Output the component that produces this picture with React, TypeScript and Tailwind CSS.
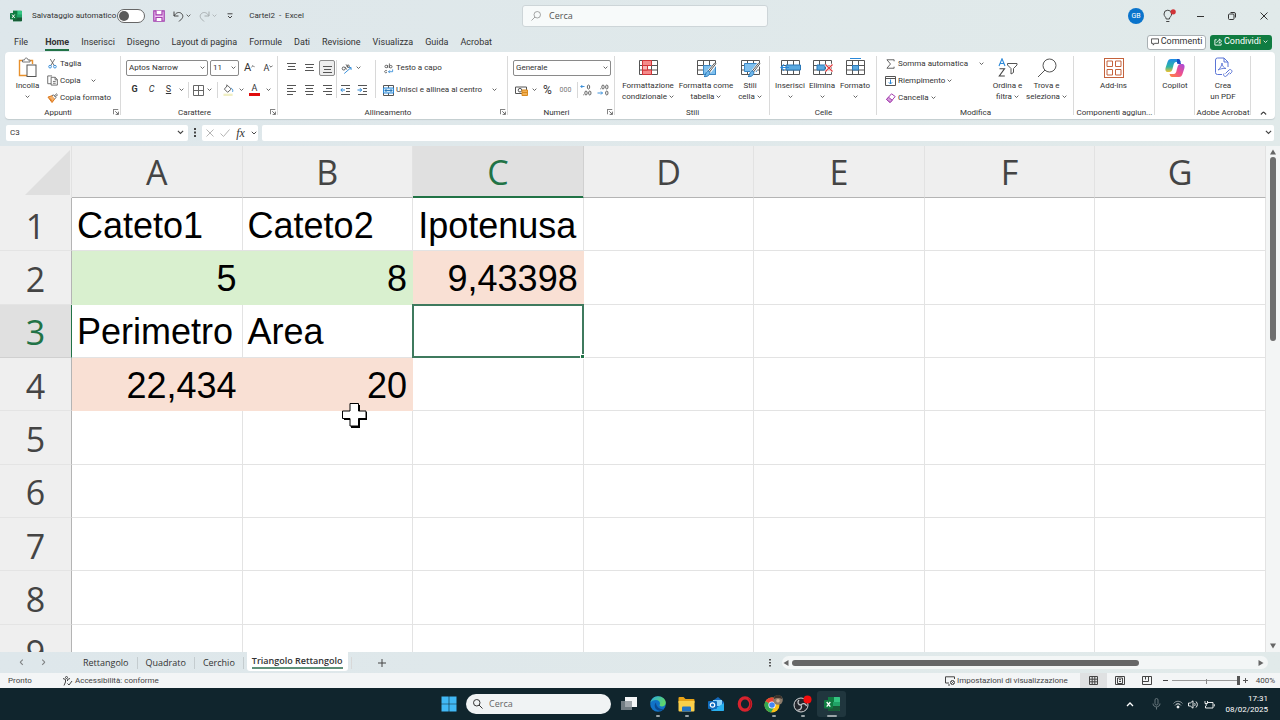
import type { ReactNode } from 'react';
import clsx from 'clsx';

const menu = ['File', 'Home', 'Inserisci', 'Disegno', 'Layout di pagina', 'Formule', 'Dati', 'Revisione', 'Visualizza', 'Guida', 'Acrobat'];
const columns = ['A', 'B', 'C', 'D', 'E', 'F', 'G'];
const sheets = ['Rettangolo', 'Quadrato', 'Cerchio'];

const green = 'bg-[#d9f0cf]';
const peach = 'bg-[#f9e0d4]';

type CellData = { value: string; number?: boolean; fill?: string };

const cells: Record<string, CellData> = {
  A1: { value: 'Cateto1' },
  B1: { value: 'Cateto2' },
  C1: { value: 'Ipotenusa' },
  A2: { value: '5', number: true, fill: green },
  B2: { value: '8', number: true, fill: green },
  C2: { value: '9,43398', number: true, fill: peach },
  A3: { value: 'Perimetro' },
  B3: { value: 'Area' },
  A4: { value: '22,434', number: true, fill: peach },
  B4: { value: '20', number: true, fill: peach },
};

/* ---------- small pieces ---------- */

const Chevron = ({ className = 'w-[5px]' }: { className?: string }) => (
  <svg viewBox="0 0 8 5" className={clsx('shrink-0', className)} fill="none" stroke="#444" strokeWidth="1.3">
    <path d="M1 1l3 3 3-3" />
  </svg>
);

const Launcher = () => (
  <svg viewBox="0 0 8 8" className="w-[6px] h-[6px]" fill="none" stroke="#444" strokeWidth="1">
    <path d="M.5 7V.5H7M3 3l4 4M7.2 3.5v3.7H3.5" />
  </svg>
);

const Divider = ({ className = 'h-4' }: { className?: string }) => <span className={clsx('w-px shrink-0 bg-[#d8d8d8]', className)} />;

interface GroupProps {
  label?: string;
  width: string;
  launcher?: boolean;
  children: ReactNode;
}

const Group = ({ label, width, launcher, children }: GroupProps) => (
  <section className={clsx('relative flex shrink-0 flex-col', width)}>
    <div className="flex h-[55px]">{children}</div>
    <div className={clsx('flex h-3 items-center justify-center whitespace-nowrap', launcher && 'pr-[10px]')}>{label}</div>
    {launcher && (
      <button aria-label={`Opzioni ${label}`} className="absolute right-[2px] bottom-1">
        <Launcher />
      </button>
    )}
    <span className="absolute top-1 right-0 bottom-1 w-px bg-[#dadada]" />
  </section>
);

const IconButton = ({ label, width = 'w-[17px]', className, children }: { label: string; width?: string; className?: string; children: ReactNode }) => (
  <button aria-label={label} className={clsx('flex h-4 shrink-0 items-center justify-center', width, className)}>
    {children}
  </button>
);

interface BigButtonProps {
  icon: ReactNode;
  lines: string[];
  width: string;
  arrow?: 'below' | 'inline';
}

const BigButton = ({ icon, lines, width, arrow }: BigButtonProps) => (
  <button className={clsx('flex shrink-0 flex-col items-center pt-[5px] leading-[11px] whitespace-nowrap', width)}>
    <span className="mb-[2px] flex h-[21px] items-center">{icon}</span>
    {lines.map((line, i) => (
      <span key={line} className="flex items-center gap-[2px]">
        {line}
        {arrow === 'inline' && i === lines.length - 1 && <Chevron />}
      </span>
    ))}
    {arrow === 'below' && (
      <span className="flex h-[11px] items-center">
        <Chevron />
      </span>
    )}
  </button>
);

const RowButton = ({ icon, text, arrow, gap = 'gap-[2px]' }: { icon: ReactNode; text: string; arrow?: boolean; gap?: string }) => (
  <button className={clsx('flex h-[17px] items-center whitespace-nowrap', gap)}>
    <span className="flex items-center gap-[2px]">
      <span className="flex w-3 justify-center">{icon}</span>
      {text}
    </span>
    {arrow && <Chevron />}
  </button>
);

const Picker = ({ label, value, width }: { label: string; value: string; width: string }) => (
  <span className={clsx('relative flex h-4', width)}>
    <select aria-label={label} className="h-full w-full appearance-none rounded-[2px] border border-[#8a8a8a] bg-white px-[2px]">
      <option>{value}</option>
    </select>
    <span className="pointer-events-none absolute inset-y-0 right-[3px] flex items-center">
      <Chevron />
    </span>
  </span>
);

/* ---------- ribbon icons ---------- */

const ExcelIcon = ({ className }: { className: string }) => (
  <svg viewBox="0 0 16 16" className={className}>
    <path d="M4 1h11a1 1 0 011 1v12a1 1 0 01-1 1H4z" fill="#21a366" />
    <path d="M4 1h6v5H4z" fill="#107c41" />
    <path d="M10 1h5a1 1 0 011 1v4h-6z" fill="#33c481" />
    <path d="M4 10h12v4a1 1 0 01-1 1H4z" fill="#185c37" />
    <rect y="4" width="9" height="8.5" rx="1" fill="#107c41" />
    <path d="M2.7 6l3.6 4.6M6.3 6l-3.6 4.6" stroke="#fff" strokeWidth="1.3" />
  </svg>
);

const PasteIcon = () => (
  <svg viewBox="0 0 19 21" className="h-[21px] w-[19px]" fill="none">
    <path d="M4.5 3.5H1.5v15h8M11.5 3.5h3V7" stroke="#e8912d" strokeWidth="1.4" />
    <path d="M4.5 5V3h2c0-2.6 3.5-2.6 3.5 0h2v2z" fill="#fff" stroke="#666" strokeWidth=".9" />
    <rect x="9" y="8" width="9" height="11.5" fill="#fff" stroke="#555" />
  </svg>
);

const CutIcon = () => (
  <svg viewBox="0 0 10 12" className="h-[11px] w-[9px]" fill="none">
    <path d="M2.5 1l4.500 7.500M7.500 1L3 8.500" stroke="#555" strokeWidth=".9" />
    <circle cx="2.300" cy="9.500" r="1.500" stroke="#2b88d8" />
    <circle cx="7.700" cy="9.500" r="1.500" stroke="#2b88d8" />
  </svg>
);

const CopyIcon = () => (
  <svg viewBox="0 0 12 12" className="h-[11px] w-[11px]" fill="#fff" stroke="#555" strokeWidth=".9">
    <path d="M5 9.500H.8V1H5.500" />
    <path d="M4.500 2.500H9L11.300 5v6H4.500z" />
    <path d="M8.800 2.700V5.200h2.400M6.500 7h3M6.500 9h3" fill="none" />
  </svg>
);

const BrushIcon = () => (
  <svg viewBox="0 0 12 11" className="h-[10px] w-[11px]" fill="none">
    <path d="M1 4.500l4.500-1.500 3 3.500-3 4z" fill="#f6b26b" stroke="#d8700f" />
    <path d="M2.500 5.500l3.500 3.500" stroke="#d8700f" />
    <path d="M5.500 3l1.500-1 2.800 3-1.300 1.500M8 3.200L10.500 1l1 1-2.200 2.200" fill="#fff" stroke="#444" strokeWidth=".9" />
  </svg>
);

const AlignIcon = ({ lines }: { lines: [number, number, number][] }) => (
  <svg viewBox="0 0 11 12" className="h-3 w-[11px]" stroke="#555" strokeWidth="1">
    {lines.map(([y, from, to]) => (
      <path key={y} d={`M${from} ${y}h${to - from}`} />
    ))}
  </svg>
);

const IndentIcon = ({ left }: { left?: boolean }) => (
  <svg viewBox="0 0 11 12" className="h-3 w-[11px]" fill="none">
    <path d="M1 1.500h9M6 4.500h4M6 7.500h4M1 10.500h9" stroke="#555" />
    <path d={left ? 'M5 6H1M2.500 4.200L.8 6l1.700 1.800' : 'M.5 6h4M3 4.200L4.700 6 3 7.800'} stroke="#2b88d8" />
  </svg>
);

const BordersIcon = () => (
  <svg viewBox="0 0 11 11" className="h-[11px] w-[11px]" fill="none" stroke="#666">
    <path d="M.5.500h10v10H.5zM5.500.500v10M.5 5.500h10" />
  </svg>
);

const FillIcon = () => (
  <svg viewBox="0 0 12 13" className="h-3 w-[11px]" fill="none">
    <path d="M5 1.500l4 4-4 3.500-3.500-3.500z" stroke="#555" />
    <path d="M4 3V.5" stroke="#555" strokeWidth=".8" />
    <path d="M9 4.500c1.500 1 2 2 1.500 4" stroke="#2b88d8" />
    <path d="M.5 10.500h10V13H.5z" fill="#f0efc4" />
  </svg>
);

const GridIcon = ({ children }: { children?: ReactNode }) => (
  <svg viewBox="0 0 21 20" className="h-5 w-[21px]" fill="none">
    <path d="M1.500 2.500h18v14h-18zM7.500 2.500v14M13.500 2.500v14M1.500 7.500h18M1.500 12h18" stroke="#555" fill="#fff" />
    {children}
  </svg>
);

const brush = (
  <>
    <path d="M19.500 5.500l-7 9-2 .5" stroke="#fff" strokeWidth="4" />
    <path d="M20 5.500l-6.500 8.500M18.800 4.800l-6.500 8.200" stroke="#444" strokeWidth=".9" />
    <path d="M12 12.500l2 1.800c-.5 3.500-3 4.700-6 4.200 2-1 1-3.500 4-6z" fill="#6fb7ea" stroke="#1f6fb2" strokeWidth=".9" />
  </>
);

const SortFilterIcon = () => (
  <svg viewBox="0 0 20 19" className="h-[19px] w-5" fill="none">
    <path d="M1 8l3-7.200L7 8M2.200 5.500h3.700" stroke="#2b88d8" strokeWidth="1.100" />
    <path d="M1.500 10.800h5L1.300 18h5.500" stroke="#444" strokeWidth="1.100" />
    <path d="M9.500 5.500h9.500v1.500l-3.500 3.500v4l-2.500 1.500v-5.500L9.500 7z" stroke="#555" />
  </svg>
);

const SearchGlyph = ({ className }: { className: string }) => (
  <svg viewBox="0 0 20 20" className={className} fill="none" stroke="currentColor">
    <circle cx="12.500" cy="7.500" r="6.500" />
    <path d="M8 12l-7 7" />
  </svg>
);

const CopilotIcon = () => (
  <svg viewBox="0 0 20 20" className="h-5 w-5">
    <defs>
      <linearGradient id="cop1" x1="0" y1="0" x2="0" y2="1">
        <stop offset="0" stopColor="#1f8be8" />
        <stop offset=".6" stopColor="#2fb6a2" />
        <stop offset="1" stopColor="#f2c230" />
      </linearGradient>
      <linearGradient id="cop2" x1="1" y1="0" x2="0" y2="1">
        <stop offset="0" stopColor="#a24be0" />
        <stop offset=".5" stopColor="#f0508c" />
        <stop offset="1" stopColor="#ff8a3c" />
      </linearGradient>
    </defs>
    <path d="M6 1h7c1.500 0 2 1 2.500 3H11C8.500 4 8.500 8 7.500 11c-.5 2-1.500 3-3 3H3c-2.500 0-3-2-2.300-4.500L2.500 4C3.200 2 4 1 6 1z" fill="url(#cop1)" />
    <path d="M14 19H7c-1.500 0-2-1-2.500-3H9c2.500 0 2.500-4 3.500-7 .5-2 1.500-3 3-3H17c2.500 0 3 2 2.300 4.500L17.500 16c-.7 2-1.500 3-3.500 3z" fill="url(#cop2)" />
    <path d="M12 1h1.500c1.200 0 1.700 1 2.500 5-2 0-3 0-4-.5z" fill="#1b4fc4" />
  </svg>
);

const PdfIcon = () => (
  <svg viewBox="0 0 19 21" className="h-[21px] w-[19px]" fill="none" stroke="#5b75d6">
    <path d="M8 17.500H3.500a2 2 0 01-2-2V3a2 2 0 012-2H10l4 4v5M10 1v4h4" />
    <path d="M4 13c2-1.500 4-4.500 4-7 0 3 2 5 4 5.500-3-.3-5.500.2-8 1.500z" strokeWidth=".9" />
    <path d="M11.500 16.500l3.500-3.500c1.500-1.500 4 .8 2.500 2.500l-1.700 1.700M15.500 15.500L12.500 19c-1.500 1.500-4-.8-2.500-2.500" />
  </svg>
);

const Ribbon = () => (
  <div className="mx-[5px] flex h-[67px] shrink-0 rounded-[4px] bg-white shadow-[0_1px_1px_#c3cccf]">
    <Group label="Appunti" width="w-[116px]" launcher>
      <BigButton icon={<PasteIcon />} lines={['Incolla']} width="w-[37px] ml-1" arrow="below" />
      <div className="flex flex-col items-start pt-[3px]">
        <RowButton icon={<CutIcon />} text="Taglia" />
        <RowButton icon={<CopyIcon />} text="Copia" arrow gap="gap-[10px]" />
        <RowButton icon={<BrushIcon />} text="Copia formato" />
      </div>
    </Group>

    <Group label="Carattere" width="w-[157px]" launcher>
      <div className="flex flex-col gap-[6px] pt-2 pl-[5px]">
        <div className="flex items-center gap-[2px]">
          <Picker label="Tipo di carattere" value="Aptos Narrow" width="w-[82px]" />
          <Picker label="Dimensione" value="11" width="w-[29px]" />
          <IconButton label="Aumenta dimensione">
            <span className="text-[11px] leading-4">A</span>
            <svg viewBox="0 0 5 8" className="h-2 w-[4px]" fill="none" stroke="#444">
              <path d="M.5 3l2-2 2 2" />
            </svg>
          </IconButton>
          <IconButton label="Riduci dimensione">
            <span className="text-[9px] leading-4">A</span>
            <svg viewBox="0 0 5 8" className="h-2 w-[4px]" fill="none" stroke="#444">
              <path d="M.5 1l2 2 2-2" />
            </svg>
          </IconButton>
        </div>
        <div className="flex items-center">
          <IconButton label="Grassetto"><b className="text-[9px]">G</b></IconButton>
          <IconButton label="Corsivo"><i className="text-[9px]">C</i></IconButton>
          <IconButton label="Sottolineato"><u className="text-[9px]">S</u></IconButton>
          <IconButton label="Opzioni sottolineatura" width="w-[8px]"><Chevron /></IconButton>
          <Divider className="mx-[3px] h-4" />
          <IconButton label="Bordi" width="w-[12px]"><BordersIcon /></IconButton>
          <IconButton label="Opzioni bordi" width="w-[11px]"><Chevron /></IconButton>
          <Divider className="mx-[2px] h-4" />
          <IconButton label="Riempimento" width="w-[17px]"><FillIcon /></IconButton>
          <IconButton label="Opzioni riempimento" width="w-[8px]"><Chevron /></IconButton>
          <IconButton label="Colore carattere" width="w-[19px]">
            <span className="w-[11px] border-b-[3px] border-[#e00b0b] text-center text-[9px] leading-[9px]">A</span>
          </IconButton>
          <IconButton label="Opzioni colore" width="w-[8px]"><Chevron /></IconButton>
        </div>
      </div>
    </Group>

    <Group label="Allineamento" width="w-[230px]" launcher>
      <div className="flex items-start pt-2 pl-[5px]">
        <div className="flex flex-col gap-[6px]">
          <div className="flex gap-px">
            <IconButton label="Allinea in alto"><AlignIcon lines={[[1.5, 1, 10], [4.5, 2, 9], [7.5, 1, 10]]} /></IconButton>
            <IconButton label="Allinea al centro"><AlignIcon lines={[[2.5, 1, 10], [5.5, 2, 9], [8.5, 1, 10]]} /></IconButton>
            <IconButton label="Allinea in basso" width="w-4" className="rounded-[2px] border border-[#8a8a8a] bg-[#ededed]">
              <AlignIcon lines={[[4.5, 1, 10], [7.5, 2, 9], [10.5, 1, 10]]} />
            </IconButton>
          </div>
          <div className="flex gap-px">
            <IconButton label="Allinea a sinistra"><AlignIcon lines={[[1.5, 1, 10], [4.5, 1, 7], [7.5, 1, 10], [10.5, 1, 7]]} /></IconButton>
            <IconButton label="Centra"><AlignIcon lines={[[1.5, 1, 10], [4.5, 2, 9], [7.5, 1, 10], [10.5, 2, 9]]} /></IconButton>
            <IconButton label="Allinea a destra"><AlignIcon lines={[[1.5, 1, 10], [4.5, 4, 10], [7.5, 1, 10], [10.5, 4, 10]]} /></IconButton>
          </div>
        </div>
        <Divider className="h-[38px]" />
        <div className="flex w-[38px] flex-col gap-[6px]">
          <button aria-label="Orientamento" className="flex h-4 items-center gap-1 pl-1">
            <svg viewBox="0 0 12 12" className="h-[11px] w-[11px]" fill="none">
              <circle cx="3" cy="6" r="1.700" stroke="#555" />
              <path d="M4.500 4.500l1.800 2.700M5.500 1.500l2.500 3.500" stroke="#555" />
              <circle cx="7.800" cy="3.500" r="1.300" stroke="#555" />
              <path d="M3.500 11.500L11 5M8.500 5H11v2.500" stroke="#2b88d8" />
            </svg>
            <Chevron />
          </button>
          <div className="flex">
            <IconButton label="Riduci rientro"><IndentIcon left /></IconButton>
            <IconButton label="Aumenta rientro"><IndentIcon /></IconButton>
          </div>
        </div>
        <Divider className="h-[38px]" />
        <div className="flex flex-col gap-[6px] pl-[7px]">
          <button className="flex h-4 items-center gap-[2px] whitespace-nowrap">
            <svg viewBox="0 0 11 12" className="h-[11px] w-[11px]" fill="none" stroke="#555" strokeWidth=".9">
              <circle cx="3" cy="3.800" r="1.400" />
              <path d="M4.600 2.200v3.200M6.500.5v5M3.800 8.500c-1.800-.8-2.500.2-2.500 1s.8 1.600 2.500.8" />
              <circle cx="8" cy="4" r="1.400" />
              <path d="M10 7v2.500H5.500M7 8L5.500 9.500 7 11" stroke="#2b88d8" />
            </svg>
            Testo a capo
          </button>
          <button className="flex h-4 items-center gap-[2px] whitespace-nowrap">
            <svg viewBox="0 0 11 11" className="h-[11px] w-[11px]" fill="none">
              <path d="M.5.500h10v10H.5zM5.500.500v10" stroke="#555" />
              <path d="M.5 3h10v5H.5z" fill="#cfe8f8" stroke="#2b88d8" />
              <path d="M2 5.500h7M3.500 4L2 5.500 3.500 7M7.500 4L9 5.500 7.500 7" stroke="#1f6fb2" strokeWidth=".9" />
            </svg>
            Unisci e allinea al centro
            <span className="ml-2 flex"><Chevron /></span>
          </button>
        </div>
      </div>
    </Group>

    <Group label="Numeri" width="w-[107px]" launcher>
      <div className="flex flex-col gap-[6px] pt-2 pl-[5px]">
        <Picker label="Formato numero" value="Generale" width="w-[98px]" />
        <div className="flex items-center">
          <IconButton label="Formato contabilità">
            <svg viewBox="0 0 13 11" className="h-[11px] w-[13px]" fill="none">
              <path d="M.5 2h11v6.500H.5z" stroke="#555" />
              <circle cx="5" cy="5.200" r="1.800" stroke="#555" />
              <path d="M7 5h5.500v5.500H7z" fill="#f0b056" stroke="#d98a1e" />
              <path d="M7 7.500h5.500" stroke="#d98a1e" />
            </svg>
          </IconButton>
          <IconButton label="Opzioni valuta" width="w-[8px]"><Chevron /></IconButton>
          <IconButton label="Percentuale" width="w-[19px]"><span className="text-[12px]">%</span></IconButton>
          <IconButton label="Separatore migliaia"><span className="text-[7px] text-[#777]">000</span></IconButton>
          <Divider className="ml-[3px] h-4" />
          <IconButton label="Aumenta decimali" width="w-[15px]">
            <svg viewBox="0 0 12 12" className="h-3 w-3" fill="none" stroke="#555" strokeWidth=".9">
              <path d="M4.500 2.500H.8M2.300 1L.8 2.500 2.300 4" stroke="#2b88d8" />
              <ellipse cx="8.500" cy="3" rx="1.200" ry="2" />
              <ellipse cx="6" cy="9" rx="1.200" ry="2" />
              <ellipse cx="9.800" cy="9" rx="1.200" ry="2" />
              <path d="M3.300 10.800h.8" />
            </svg>
          </IconButton>
          <IconButton label="Diminuisci decimali" width="w-[19px]">
            <svg viewBox="0 0 12 12" className="h-3 w-3" fill="none" stroke="#555" strokeWidth=".9">
              <ellipse cx="6" cy="3" rx="1.200" ry="2" />
              <ellipse cx="9.800" cy="3" rx="1.200" ry="2" />
              <ellipse cx="9.800" cy="9" rx="1.200" ry="2" />
              <path d="M3.300 4.800h.8" />
              <path d="M.5 9h5M4 7.500L5.500 9 4 10.500" stroke="#2b88d8" />
            </svg>
          </IconButton>
        </div>
      </div>
    </Group>

    <Group label="Stili" width="w-[155px]">
      <BigButton
        width="w-[60px] ml-[3px]"
        lines={['Formattazione', 'condizionale']}
        arrow="inline"
        icon={
          <GridIcon>
            <path d="M4.500 2.500h9v5h-9zM4.500 12h9v4.500h-9z" fill="#f48a8a" stroke="#d13438" />
            <path d="M4.500 7.500h5V12h-5z" fill="#f9b8b8" stroke="#d13438" />
          </GridIcon>
        }
      />
      <BigButton
        width="w-[56px]"
        lines={['Formatta come', 'tabella']}
        arrow="inline"
        icon={
          <GridIcon>
            <path d="M7.500 7.500h12v9h-12z" fill="#7fc0ee" stroke="#3b87c4" />
            {brush}
          </GridIcon>
        }
      />
      <BigButton
        width="w-[32px]"
        lines={['Stili', 'cella']}
        arrow="inline"
        icon={
          <GridIcon>
            <path d="M4.500 5.500h12v8h-12z" fill="#7fc0ee" stroke="#3b87c4" />
            {brush}
          </GridIcon>
        }
      />
    </Group>

    <Group label="Celle" width="w-[107px]">
      <BigButton
        width="w-[32px] ml-[4px]"
        lines={['Inserisci']}
        arrow="below"
        icon={
          <GridIcon>
            <path d="M6 7h14.500v5H6z" fill="#5aa9e0" stroke="#2a78b8" />
            <path d="M9 9.500H1M4 6.500L1 9.500l3 3" stroke="#2b88d8" strokeWidth="1.200" />
          </GridIcon>
        }
      />
      <BigButton
        width="w-[32px]"
        lines={['Elimina']}
        arrow="below"
        icon={
          <GridIcon>
            <path d="M5 7h8v5H5z" fill="#5aa9e0" stroke="#2a78b8" />
            <path d="M13.500 6.500l7 7M20.500 6.500l-7 7" stroke="#fff" strokeWidth="3" />
            <path d="M13.500 6.500l7 7M20.500 6.500l-7 7" stroke="#e03a3e" strokeWidth="1.200" />
          </GridIcon>
        }
      />
      <BigButton
        width="w-[34px]"
        lines={['Formato']}
        arrow="below"
        icon={
          <GridIcon>
            <path d="M7.500 7.500h6V12h-6z" fill="#5aa9e0" stroke="#2a78b8" />
            <path d="M5 .5h11" stroke="#2b88d8" />
          </GridIcon>
        }
      />
    </Group>

    <Group label="Modifica" width="w-[197px]">
      <div className="flex w-[112px] flex-col items-start pt-[3px] pl-[7px]">
        <RowButton
          text="Somma automatica"
          arrow
          gap="gap-[11px]"
          icon={
            <svg viewBox="0 0 10 11" className="h-[10px] w-[9px]" fill="none" stroke="#555">
              <path d="M9 2.500V.8H1l4 4.700-4 4.700h8V8.500" />
            </svg>
          }
        />
        <RowButton
          text="Riempimento"
          arrow
          icon={
            <svg viewBox="0 0 11 10" className="h-[10px] w-[11px]" fill="none">
              <path d="M.5.500h10v9H.5zM.5 2.500h10" stroke="#555" />
              <path d="M5.500 3.500v4.500M3.800 6.300L5.500 8l1.700-1.700" stroke="#2b88d8" />
            </svg>
          }
        />
        <RowButton
          text="Cancella"
          arrow
          icon={
            <svg viewBox="0 0 11 10" className="h-[10px] w-[11px]" fill="none" stroke="#a33fae">
              <path d="M6.500.8l3.700 2.700-5 6-3.700-3z" fill="#fff" />
              <path d="M3.500 4.200l3.700 3-2 2.300-3.700-3z" fill="#d59adb" />
            </svg>
          }
        />
      </div>
      <BigButton icon={<SortFilterIcon />} lines={['Ordina e', 'filtra']} width="w-[37px]" arrow="inline" />
      <BigButton icon={<SearchGlyph className="h-5 w-5 text-[#555]" />} lines={['Trova e', 'seleziona']} width="w-[41px]" arrow="inline" />
    </Group>

    <Group label="Componenti aggiun..." width="w-[81px]">
      <BigButton
        width="w-[79px]"
        lines={['Add-ins']}
        icon={
          <svg viewBox="0 0 20 20" className="h-5 w-5" fill="none" stroke="#c4623c">
            <rect x=".5" y=".5" width="19" height="19" />
            <path d="M3 3h5.500v5.500H3zM11.500 3H17v5.500h-5.500zM3 11.500h5.500V17H3zM11.500 11.500H17V17h-5.500z" />
          </svg>
        }
      />
    </Group>
    <Group width="w-[40px]">
      <BigButton icon={<CopilotIcon />} lines={['Copilot']} width="w-full" />
    </Group>
    <Group label="Adobe Acrobat" width="w-[56px]">
      <BigButton icon={<PdfIcon />} lines={['Crea', 'un PDF']} width="w-full" />
    </Group>
    <button aria-label="Comprimi barra multifunzione" className="flex flex-1 items-end justify-center pb-1">
      <Chevron className="w-[7px] rotate-180" />
    </button>
  </div>
);

/* ---------- window chrome ---------- */

const TitleBar = () => (
  <header className="grid h-8 shrink-0 grid-cols-[1fr_auto_1fr] items-center">
    <div className="flex items-center pl-[10px] whitespace-nowrap">
      <ExcelIcon className="h-3 w-3" />
      <label className="ml-[10px] flex items-center gap-px">
        Salvataggio automatico
        <input
          type="checkbox"
          role="switch"
          className="relative h-[14px] w-7 appearance-none rounded-full border border-[#666] bg-white before:absolute before:top-px before:left-px before:h-[10px] before:w-[10px] before:rounded-full before:bg-[#5a5a5a]"
        />
      </label>
      <button aria-label="Salva" className="ml-2">
        <svg viewBox="0 0 12 12" className="h-3 w-3" fill="#efc6f3" stroke="#a33fae" strokeWidth="1.200">
          <path d="M.8.800h10.400v10.400H.8z" />
          <path d="M3 .8v4h6v-4M3 11V7.500h6V11" fill="#fff" />
        </svg>
      </button>
      <button aria-label="Annulla" className="ml-2 flex items-center gap-[2px]">
        <svg viewBox="0 0 11 11" className="h-[11px] w-[11px]" fill="none" stroke="#444">
          <path d="M1 .5v4.500h4.500M1 5c2-3.500 5-4.500 7.500-2.500 2 2 1.500 4 0 5.500L6 10.500" />
        </svg>
        <Chevron />
      </button>
      <button aria-label="Ripeti" className="ml-2 flex items-center gap-[2px] opacity-35">
        <svg viewBox="0 0 11 11" className="h-[11px] w-[11px] -scale-x-100" fill="none" stroke="#444">
          <path d="M1 .5v4.500h4.500M1 5c2-3.500 5-4.500 7.500-2.500 2 2 1.500 4 0 5.500L6 10.500" />
        </svg>
        <Chevron />
      </button>
      <button aria-label="Personalizza" className="ml-[10px]">
        <svg viewBox="0 0 6 6" className="h-[6px] w-[6px]" fill="none" stroke="#444">
          <path d="M.5.800h5M1 3l2 2 2-2" />
        </svg>
      </button>
      <span className="ml-4">Cartel2&nbsp; -&nbsp; Excel</span>
    </div>

    <label className="ml-[10px] flex h-[22px] w-[246px] items-center gap-2 rounded-[3px] border border-[#cdd5d8] bg-[#f7fafa] px-2 font-['Open_Sans','Noto_Sans',sans-serif] text-[9px] text-[#555]">
      <SearchGlyph className="h-[10px] w-[10px]" />
      <input aria-label="Cerca" placeholder="Cerca" className="min-w-0 flex-1 bg-transparent outline-none placeholder:text-[#555]" />
    </label>

    <div className="flex justify-end">
      <button className="flex w-8 items-center justify-center" aria-label="Account">
        <span className="flex h-4 w-4 items-center justify-center rounded-full bg-[#0a74cc] text-[7px] text-white">GB</span>
      </button>
      <button className="flex w-8 items-center justify-center" aria-label="Suggerimenti">
        <svg viewBox="0 0 13 14" className="ml-[3px] h-[14px] w-[13px]" fill="none" stroke="#444">
          <path d="M3.200 10c0-2-2.200-2.500-2.200-5a3.800 3.800 0 017.600 0c0 2.500-2.200 3-2.200 5zM3.200 12.500h3.200" />
          <circle cx="10.200" cy="2.800" r="2.600" fill="#d13438" stroke="none" />
        </svg>
      </button>
      <button className="flex h-8 w-8 items-center justify-center" aria-label="Riduci a icona">
        <span className="h-px w-[7px] bg-[#333]" />
      </button>
      <button className="flex w-8 items-center justify-center" aria-label="Ripristina">
        <svg viewBox="0 0 8 8" className="h-2 w-2" fill="none" stroke="#333">
          <rect x=".5" y="2" width="5.500" height="5.500" rx="1" />
          <path d="M2.500.500H6a1.500 1.500 0 011.500 1.500v3.500" />
        </svg>
      </button>
      <button className="flex w-8 items-center justify-center" aria-label="Chiudi">
        <svg viewBox="0 0 8 8" className="h-2 w-2" stroke="#333">
          <path d="M.5.500l7 7M7.500.500l-7 7" />
        </svg>
      </button>
    </div>
  </header>
);

const MenuBar = () => (
  <nav className="flex h-5 shrink-0 items-center gap-3 pr-2 pl-[14px] text-[9px]">
    {menu.map((item) => (
      <button key={item} className={clsx('h-[17px] border-b-2 pt-px leading-[14px] whitespace-nowrap', item === 'Home' ? 'ml-[5px] border-[#217346] font-bold' : 'border-transparent')}>
        {item}
      </button>
    ))}
    <div className="ml-auto flex gap-1">
      <button className="flex h-[15px] w-[59px] items-center justify-center gap-[2px] rounded-[3px] border border-[#a9b0b3] bg-white">
        <svg viewBox="0 0 9 9" className="h-2 w-2" fill="none" stroke="#444">
          <path d="M.5 1h8v5H4L2.500 8V6h-2z" />
        </svg>
        Commenti
      </button>
      <button className="flex h-[15px] w-[62px] items-center justify-center gap-[2px] rounded-[3px] bg-[#107c41] text-white">
        <svg viewBox="0 0 9 9" className="h-2 w-2" fill="none" stroke="#fff">
          <path d="M3 2H1v6h7V6M3 5.500C3.500 3.500 5 3 6 3V1l2.500 2.500L6 6V4" />
        </svg>
        Condividi
        <svg viewBox="0 0 8 5" className="w-[5px]" fill="none" stroke="#fff" strokeWidth="1.300">
          <path d="M1 1l3 3 3-3" />
        </svg>
      </button>
    </div>
  </nav>
);

const FormulaBar = () => (
  <div className="flex h-[27px] shrink-0 items-center px-[6px]">
    <label className="flex h-4 w-[182px] items-center rounded-[2px] bg-white pr-1 pl-1">
      <input aria-label="Casella nome" defaultValue="C3" className="min-w-0 flex-1 outline-none" />
      <Chevron className="w-[7px]" />
    </label>
    <svg viewBox="0 0 2 9" className="mx-[6px] h-[9px] w-[2px]" fill="#444">
      <path d="M0 0h2v2H0zM0 3.500h2v2H0zM0 7h2v2H0z" />
    </svg>
    <div className="flex h-4 w-[56px] items-center justify-between rounded-[2px] bg-white pr-px pl-1">
      <button aria-label="Annulla modifica">
        <svg viewBox="0 0 8 8" className="h-2 w-2" stroke="#b5b5b5"><path d="M.5.500l7 7M7.500.500l-7 7" /></svg>
      </button>
      <button aria-label="Conferma">
        <svg viewBox="0 0 10 8" className="h-2 w-[10px]" fill="none" stroke="#b5b5b5"><path d="M.5 4.500l3 3 6-7" /></svg>
      </button>
      <button aria-label="Inserisci funzione" className="font-['Liberation_Serif',serif] text-[12px] leading-4 italic">fx</button>
      <Chevron className="w-[6px]" />
    </div>
    <label className="ml-1 flex h-4 flex-1 items-center rounded-[2px] bg-white pr-[2px]">
      <input aria-label="Barra della formula" className="min-w-0 flex-1 outline-none" />
      <Chevron className="w-[7px]" />
    </label>
  </div>
);

/* ---------- sheet ---------- */

const headText = "text-[34px] leading-none font-normal text-[#444] font-['Open_Sans','Noto_Sans',sans-serif]";

const Sheet = () => (
  <main className="relative flex min-h-0 flex-1 overflow-hidden bg-[#efefef]">
    <div className="min-w-0 flex-1">
      <table className="h-[532px] w-full table-fixed border-separate border-spacing-0">
        <thead>
          <tr className="h-[52px]">
            <th className="w-[72px] border-r border-r-[#e2e2e2] bg-[#efefef] p-0">
              <svg viewBox="0 0 45 45" className="mr-px ml-auto h-[45px] w-[45px]">
                <path d="M45 0v45H0z" fill="#dfdfdf" />
              </svg>
            </th>
            {columns.map((col) => (
              <th
                key={col}
                scope="col"
                className={clsx(
                  'border-r border-b p-0',
                  headText,
                  col === 'C' ? 'border-r-[#d0d0d0] border-b-[#217346] bg-[#e0e0e0] text-[#217346] shadow-[inset_0_-1px_0_#217346]' : 'border-r-[#e2e2e2] border-b-[#b4b4b4] bg-[#efefef]'
                )}
              >
                {col}
              </th>
            ))}
          </tr>
        </thead>
        <tbody>
          {[1, 2, 3, 4, 5, 6, 7, 8, 9].map((row) => (
            <tr key={row} className="h-[53px]">
              <th
                scope="row"
                className={clsx(
                  'border-r border-b px-0 pt-[3px] pb-0 align-middle',
                  headText,
                  row === 3 ? 'border-r-[#217346] border-b-[#d0d0d0] bg-[#e0e0e0] text-[#217346]' : 'border-r-[#b4b4b4] border-b-[#e4e4e4] bg-[#efefef]'
                )}
              >
                {row}
              </th>
              {columns.map((col) => {
                const cell = cells[`${col}${row}`];
                const active = col === 'C' && row === 3;
                return (
                  <td
                    key={col}
                    className={clsx(
                      "relative border-r border-b px-[5px] pt-[3px] pb-0 font-['Liberation_Sans',sans-serif] text-[36px] leading-none whitespace-nowrap text-black",
                      cell?.number && 'text-right',
                      cell?.fill ? clsx(cell.fill, 'border-transparent') : 'border-[#e3e3e3] bg-white'
                    )}
                  >
                    {cell?.value}
                    {active && (
                      <span className="absolute -inset-px z-10 border-2 border-[#3f7a5e]">
                        <span className="absolute -right-[3px] -bottom-[3px] h-[5px] w-[5px] border border-white bg-[#217346]" />
                      </span>
                    )}
                  </td>
                );
              })}
            </tr>
          ))}
        </tbody>
      </table>
    </div>

    <div className="flex w-[14px] shrink-0 flex-col items-center justify-between bg-[#f3f5f5] py-[3px]">
      <svg viewBox="0 0 6 6" className="h-[6px] w-[6px] shrink-0" fill="#666"><path d="M3 .5l3 5H0z" /></svg>
      <div className="my-[2px] w-full flex-1">
        <div className="mx-auto h-[38%] w-[6px] rounded-full bg-[#6e6e6e]" />
      </div>
      <svg viewBox="0 0 6 6" className="h-[6px] w-[6px] shrink-0" fill="#666"><path d="M3 5.500l3-5H0z" /></svg>
    </div>

    {/* cross pointer */}
    <svg viewBox="0 0 26 26" className="pointer-events-none absolute top-[256px] left-[341px] z-20 h-[26px] w-[26px]">
      <path d="M10 3h9v7h7v8h-7v8h-9v-8H3v-8h7z" fill="#000" />
      <path d="M9 1.500h8.500v7.500H25v7.500h-7.500V24H9v-7.500H1.500V9H9z" fill="#fff" stroke="#000" />
    </svg>
  </main>
);

const SheetTabs = () => (
  <div className="flex h-[21px] shrink-0 items-center font-['Open_Sans','Noto_Sans',sans-serif] text-[9px]">
    <div className="flex w-[75px] gap-[15px] pl-[18px]">
      <button aria-label="Foglio precedente"><Chevron className="w-[7px] rotate-90 opacity-60" /></button>
      <button aria-label="Foglio successivo"><Chevron className="w-[7px] -rotate-90 opacity-60" /></button>
    </div>
    {sheets.map((name) => (
      <button key={name} className="flex h-3 items-center border-r border-[#c4cccf] px-[8px]">{name}</button>
    ))}
    <button className="ml-[3px] flex h-[19px] items-center self-start rounded-b-[3px] bg-white px-[5px] font-semibold">
      <span className="border-b-2 border-[#5f9079] leading-[13px]">Triangolo Rettangolo</span>
    </button>
    <Divider className="ml-[3px] h-3 bg-[#c4cccf]" />
    <button aria-label="Nuovo foglio" className="ml-[26px]">
      <svg viewBox="0 0 8 8" className="h-2 w-2" stroke="#444"><path d="M4 0v8M0 4h8" /></svg>
    </button>
    <svg viewBox="0 0 2 8" className="mr-[11px] ml-auto h-2 w-[2px]" fill="#555">
      <path d="M0 0h2v1.500H0zM0 3h2v1.500H0zM0 6h2v1.500H0z" />
    </svg>
    <div className="mr-3 flex h-[13px] w-[38%] items-center gap-[3px] rounded-full bg-[#f3f6f6] pr-1 pl-px">
      <svg viewBox="0 0 6 6" className="h-[6px] w-[6px]" fill="#666"><path d="M.5 3l5-3v6z" /></svg>
      <div className="flex-1">
        <div className="h-[6px] w-[75%] rounded-full bg-[#666]" />
      </div>
      <svg viewBox="0 0 6 6" className="h-[6px] w-[6px]" fill="#666"><path d="M5.500 3l-5-3v6z" /></svg>
    </div>
  </div>
);

const StatusBar = () => (
  <div className="flex h-[15px] shrink-0 items-center bg-[#f3f5f6] pr-[5px] pl-2 text-[#444]">
    <span className="w-[54px]">Pronto</span>
    <button className="flex items-center gap-[2px]">
      <svg viewBox="0 0 11 10" className="h-[10px] w-[11px]" fill="none" stroke="#444">
        <circle cx="4.500" cy="1.500" r="1" />
        <path d="M1 2.500l2.500 1V6L2 9.500M8 2.500l-2.500 1V5M5.500 7.500l1.500 1.500 3-4" />
      </svg>
      Accessibilità: conforme
    </button>
    <button className="ml-auto flex items-center gap-px">
      <svg viewBox="0 0 11 10" className="h-[10px] w-[11px]" fill="none" stroke="#444">
        <path d="M9.500 3V.8h-9V7H4M3 9h2" />
        <circle cx="7.500" cy="6.500" r="2" />
        <path d="M6 5l3 3M9 5L6 8" strokeWidth=".7" />
      </svg>
      Impostazioni di visualizzazione
    </button>
    <div className="ml-3 flex">
      <button aria-label="Normale" className="flex h-[15px] w-[27px] items-center justify-center bg-[#dfe1e2]">
        <svg viewBox="0 0 9 9" className="h-[9px] w-[9px]" fill="none" stroke="#444"><path d="M.5.500h8v8h-8zM3.200.500v8M5.800.500v8M.5 3.200h8M.5 5.800h8" /></svg>
      </button>
      <button aria-label="Layout di pagina" className="flex h-[15px] w-[27px] items-center justify-center">
        <svg viewBox="0 0 10 9" className="h-[9px] w-[10px]" fill="none" stroke="#444"><path d="M.5.500h9v8h-9zM2.500 2h5v5.500h-5zM4 3.700h2M4 5.500h2" /></svg>
      </button>
      <button aria-label="Interruzioni di pagina" className="flex h-[15px] w-[27px] items-center justify-center">
        <svg viewBox="0 0 10 9" className="h-[9px] w-[10px]" fill="none" stroke="#444"><path d="M.5.500h9v8h-9zM.5 5.500h6v-5M3.500.500v3" /></svg>
      </button>
    </div>
    <button aria-label="Zoom indietro" className="ml-[2px] h-px w-[5px] bg-[#444]" />
    <label className="relative ml-1 flex w-[68px] items-center">
      <span className="absolute top-1/2 left-1/2 -mt-[2px] h-[5px] w-px bg-[#888]" />
      <input
        type="range"
        aria-label="Zoom"
        min={10}
        max={400}
        defaultValue={400}
        className="h-2 w-full appearance-none bg-transparent [&::-webkit-slider-runnable-track]:h-px [&::-webkit-slider-runnable-track]:bg-[#999] [&::-webkit-slider-thumb]:-mt-[4px] [&::-webkit-slider-thumb]:h-[9px] [&::-webkit-slider-thumb]:w-[3px] [&::-webkit-slider-thumb]:appearance-none [&::-webkit-slider-thumb]:bg-[#555]"
      />
    </label>
    <button aria-label="Zoom avanti" className="ml-[3px]">
      <svg viewBox="0 0 5 5" className="h-[5px] w-[5px]" stroke="#555"><path d="M2.500 0v5M0 2.500h5" /></svg>
    </button>
    <span className="ml-2">400%</span>
  </div>
);

/* ---------- taskbar ---------- */

const EdgeIcon = () => (
  <svg viewBox="0 0 16 16" className="h-4 w-4">
    <defs>
      <linearGradient id="edge1" x1="0" y1="0" x2="1" y2=".4">
        <stop offset="0" stopColor="#2aa9e0" />
        <stop offset="1" stopColor="#5fd66b" />
      </linearGradient>
    </defs>
    <circle cx="8" cy="8" r="7.800" fill="#1173c7" />
    <path d="M.3 7C1 3 4 .2 8 .2c4.500 0 7.800 3 7.800 6.500 0 2.300-1.800 3.800-4 3.800-1.500 0-2.300-.6-2.300-1.200 0-.5.500-.8.500-1.800C10 5.500 8.300 4 6 4 3.500 4 1 5 .3 7z" fill="url(#edge1)" />
    <path d="M6 6.500c-1.800 1.500-1.800 5 .5 7 2 1.700 5 1.500 7.500-.7-1.500.5-4 .3-5.500-1C7 10.500 6 9 6 6.500z" fill="#0b4a92" />
  </svg>
);

const ChromeIcon = () => (
  <svg viewBox="0 0 19 18" className="h-[18px] w-[19px]">
    <circle cx="8" cy="10" r="7.500" fill="#fbc116" />
    <path d="M8 10L1.500 6.200A7.500 7.500 0 0114.500 6.200z" fill="#ea4335" />
    <path d="M8 10l-6.500-3.800A7.500 7.500 0 007 17.400l3.500-6z" fill="#34a853" />
    <circle cx="8" cy="10" r="3.600" fill="#fff" />
    <circle cx="8" cy="10" r="2.800" fill="#4285f4" />
    <circle cx="14" cy="5" r="4.800" fill="#8d7c6b" />
    <path d="M10 4a4 4 0 018 0c-2-1.500-6-1.500-8 0z" fill="#3c332c" />
    <circle cx="14" cy="5.800" r="1.800" fill="#d6b596" />
  </svg>
);

const taskbarApps: { name: string; running?: boolean; active?: boolean; icon: ReactNode }[] = [
  {
    name: 'Visualizzazione attività',
    icon: (
      <svg viewBox="0 0 17 16" className="h-4 w-[17px]">
        <rect x="5" y="1" width="12" height="10" fill="#f4f6f7" />
        <rect x="1" y="5" width="11" height="9" fill="#8b9498" opacity=".8" />
      </svg>
    ),
  },
  { name: 'Edge', running: true, icon: <EdgeIcon /> },
  {
    name: 'Esplora file',
    running: true,
    icon: (
      <svg viewBox="0 0 17 15" className="h-[15px] w-[17px]">
        <path d="M.5 1a1 1 0 011-1h4L7.500 2h8a1 1 0 011 1v3H.5z" fill="#e8a317" />
        <path d="M.5 4h16v9.500a1 1 0 01-1 1h-14a1 1 0 01-1-1z" fill="#fbcf4a" />
        <path d="M4 14.500V10.500a1 1 0 011-1h7a1 1 0 011 1v4z" fill="#2473c4" />
      </svg>
    ),
  },
  {
    name: 'Outlook',
    icon: (
      <svg viewBox="0 0 16 16" className="h-4 w-4">
        <path d="M3 6l7-5 6 5v8a1 1 0 01-1 1H4a1 1 0 01-1-1z" fill="#1468b8" />
        <path d="M5 4h9v6H5z" fill="#8bd3fa" />
        <path d="M3 15l13-8v7a1 1 0 01-1 1z" fill="#29b0ee" />
        <rect y="5" width="9" height="8" rx="1" fill="#0f6cbd" />
        <circle cx="4.500" cy="9" r="2.200" fill="none" stroke="#fff" strokeWidth="1.200" />
      </svg>
    ),
  },
  {
    name: 'Opera',
    icon: (
      <svg viewBox="0 0 16 16" className="h-4 w-4">
        <ellipse cx="8" cy="8" rx="5.700" ry="6.200" fill="none" stroke="#d8232e" strokeWidth="3.200" />
        <path d="M11 2a7 7 0 010 12 9 9 0 000-12z" fill="#a3121b" />
      </svg>
    ),
  },
  { name: 'Chrome', running: true, icon: <ChromeIcon /> },
  {
    name: 'OBS',
    running: true,
    icon: (
      <svg viewBox="0 0 19 18" className="h-[18px] w-[19px]" fill="none">
        <circle cx="8" cy="10" r="7" fill="#23262c" stroke="#d5d8da" />
        <path d="M8 10c-3 0-4-3-2-5M8 10c1.500-2.500 5-1.500 5.500 1M8 10c1.500 2.500-.5 5.500-3.500 5" stroke="#c3c7ca" strokeWidth="1.300" />
        <circle cx="14.500" cy="4.500" r="4" fill="#f40d0d" />
      </svg>
    ),
  },
  { name: 'Excel', running: true, active: true, icon: <ExcelIcon className="h-4 w-4" /> },
];

const Taskbar = () => (
  <footer className="grid h-8 shrink-0 grid-cols-[1fr_auto_1fr] items-center bg-[#10252d] text-white">
    <span />
    <div className="flex items-center gap-[3px]">
      <button aria-label="Start" className="flex w-[29px] justify-center">
        <svg viewBox="0 0 16 16" className="h-4 w-4" fill="#41b8f5">
          <path d="M.5.500h7.200v7.200H.5zM8.300.500h7.200v7.200H8.300zM.5 8.300h7.200v7.200H.5zM8.300 8.300h7.200v7.200H8.300z" />
        </svg>
      </button>
      <label className="flex h-5 w-[145px] items-center gap-[6px] rounded-full bg-[#f0f3f4] px-[7px] font-['Open_Sans','Noto_Sans',sans-serif] text-[9px] text-[#333]">
        <SearchGlyph className="h-[10px] w-[10px] -scale-x-100 stroke-2" />
        <input aria-label="Cerca nella barra" placeholder="Cerca" className="min-w-0 flex-1 bg-transparent outline-none placeholder:text-[#666]" />
      </label>
      <div className="flex">
        {taskbarApps.map((app) => (
          <button
            key={app.name}
            aria-label={app.name}
            className={clsx('relative flex h-[26px] w-[29px] items-center justify-center rounded-[3px]', app.active && 'bg-[#20363e]')}
          >
            {app.icon}
            {app.running && <span className={clsx('absolute bottom-0 h-[2px] rounded-full bg-[#9aa4a8]', app.active ? 'w-[10px]' : 'w-1')} />}
          </button>
        ))}
      </div>
    </div>
    <div className="flex items-center justify-end pr-3">
      <svg viewBox="0 0 8 5" className="mr-[18px] w-2" fill="none" stroke="#fff" strokeWidth="1.300"><path d="M1 4l3-3 3 3" /></svg>
      <svg viewBox="0 0 9 12" className="mr-3 h-3 w-[9px]" fill="none" stroke="#67767c">
        <rect x="3" y=".5" width="3" height="6.500" rx="1.500" />
        <path d="M1 5.500c0 4.500 7 4.500 7 0M4.500 9v2.500" />
      </svg>
      <svg viewBox="0 0 10 9" className="mr-[5px] h-[9px] w-[10px]" fill="none" stroke="#fff">
        <path d="M.5 3.500c2.500-3 6.500-3 9 0" opacity=".5" />
        <path d="M2.200 5.300c1.500-2 4-2 5.600 0" />
        <circle cx="5" cy="7" r="1" fill="#fff" />
      </svg>
      <svg viewBox="0 0 10 9" className="mr-[6px] h-[9px] w-[10px]" fill="none" stroke="#fff" strokeWidth=".9">
        <path d="M.5 3h1.800L5 .8v7.400L2.300 6H.5zM6.500 3c.8 1 .8 2 0 3M8 1.500c1.800 2 1.800 4 0 6" />
      </svg>
      <svg viewBox="0 0 11 9" className="h-[9px] w-[11px]" fill="none" stroke="#fff" strokeWidth=".9">
        <path d="M4 2.500h5v5.500H1.500V6M10.300 4.200v2.200M1 1v2.500h2.500V1M2.200 3.500V6" />
      </svg>
      <div className="w-[53px] text-right leading-[11px]">
        <p>17:31</p>
        <p>08/02/2025</p>
      </div>
    </div>
  </footer>
);

export default function App() {
  return (
    <div className="flex h-screen flex-col overflow-hidden bg-linear-to-r from-[#dee7eb] to-[#e1eaea] font-['Roboto','Noto_Sans',sans-serif] text-[8px] text-[#333]">
      <TitleBar />
      <MenuBar />
      <Ribbon />
      <FormulaBar />
      <Sheet />
      <SheetTabs />
      <StatusBar />
      <Taskbar />
    </div>
  );
}
